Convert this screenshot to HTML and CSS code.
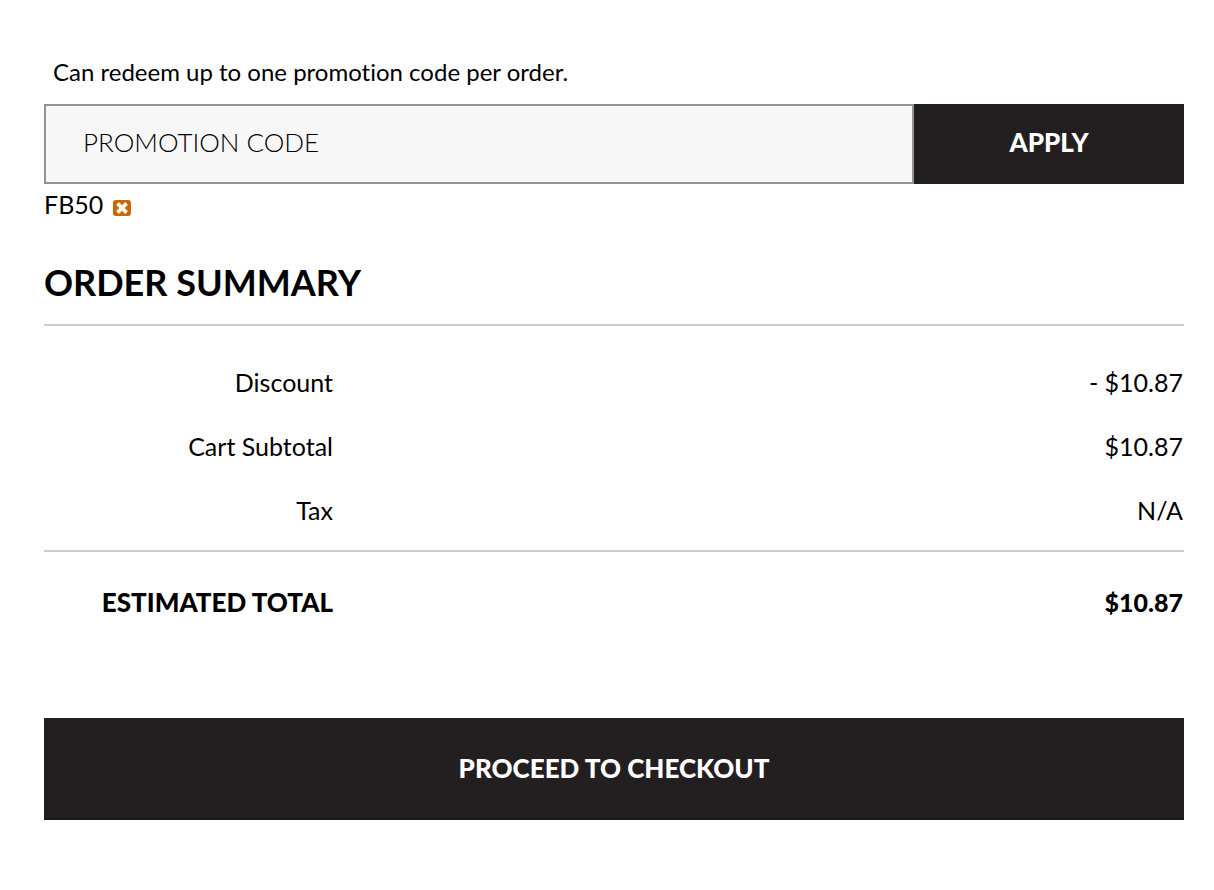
FILE: index.html
```html
<!DOCTYPE html>
<html lang="en">
<head>
<meta charset="utf-8">
<meta name="viewport" content="width=device-width, initial-scale=1">
<title>Order Summary</title>
<link rel="stylesheet" href="styles.css">
</head>
<body>
<main class="cart">
  <form class="promo">
    <label class="promo-note" for="code">Can redeem up to one promotion code per order.</label>
    <div class="promo-row">
      <input class="promo-input" id="code" type="text" placeholder="PROMOTION CODE">
      <button class="promo-apply" type="button">APPLY</button>
    </div>
    <div class="applied">
      <span>FB50</span>
      <button class="remove" type="button" aria-label="Remove FB50">
        <svg class="remove-icon" viewBox="0 0 18 16" aria-hidden="true">
          <rect width="18" height="16" rx="3" fill="#cc6600"/>
          <path d="M4.5 3.5l9 9M13.5 3.5l-9 9" stroke="#f3d9bf" stroke-width="4"/>
          <path d="M4.5 3.5l9 9M13.5 3.5l-9 9" stroke="#fff" stroke-width="2.6"/>
        </svg>
      </button>
    </div>
  </form>
  <h2 class="title">ORDER SUMMARY</h2>
  <table class="totals">
    <tbody>
      <tr><th scope="row">Discount</th><td>- $10.87</td></tr>
      <tr><th scope="row">Cart Subtotal</th><td>$10.87</td></tr>
      <tr><th scope="row">Tax</th><td>N/A</td></tr>
    </tbody>
    <tfoot>
      <tr><th scope="row">ESTIMATED TOTAL</th><td>$10.87</td></tr>
    </tfoot>
  </table>
  <button class="checkout" type="button">PROCEED TO CHECKOUT</button>
</main>
</body>
</html>
```
FILE: styles.css
```css
* { box-sizing: border-box; }
body { margin: 0; background: #fff; color: #000; font-family: Lato, sans-serif; font-size: 25px; line-height: 32px; font-variant-ligatures: none; }
button, input { font: inherit; border-radius: 0; }
.cart { padding: 56px 30px 70px 44px; }
.promo-note { display: block; padding: 0 9px; margin-bottom: 16px; font-size: 24px; }
.promo-row { display: flex; height: 80px; }
.promo-input { flex: 1; min-width: 0; padding: 0 38px 4px 37px; border: 2px solid #929297; background: #f7f7f7; font-size: 26px; font-weight: 300; }
.promo-input::placeholder { color: #000; opacity: 1; }
.promo-apply { width: 270px; padding: 0 0 4px; border: 0; background: #231f20; color: #fff; font-size: 26px; font-weight: 900; }
.applied { display: flex; align-items: center; gap: 10px; padding-top: 4px; }
.remove { height: 16px; margin-top: 8px; padding: 0; border: 0; background: none; }
.remove-icon { display: block; width: 18px; height: 16px; }
.title { margin: 38px 0 0; padding-bottom: 18px; border-bottom: 2px solid #ccc; font-size: 36px; line-height: 48px; font-weight: 700; }
.totals { width: 100%; border-collapse: separate; border-spacing: 0; }
.totals th { width: 289px; padding: 16px 0; text-align: right; font-weight: 400; }
.totals td { padding: 16px 1px 16px 0; text-align: right; }
.totals tbody::before { content: ""; display: block; height: 24px; }
.totals tbody tr:last-child > * { padding-bottom: 24px; }
.totals tfoot th, .totals tfoot td { padding-top: 34px; border-top: 2px solid #ccc; font-weight: 900; }
.totals tfoot th { font-size: 26px; }
.checkout { display: block; width: 100%; height: 102px; margin-top: 84px; padding: 0; border: 0; border-bottom: 2px solid #1c191a; background: #231f20; color: #fff; font-size: 26px; font-weight: 900; }
```
